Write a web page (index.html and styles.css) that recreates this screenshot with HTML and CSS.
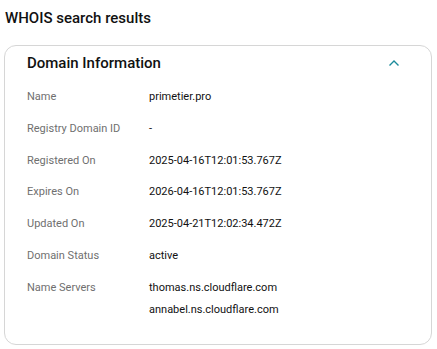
FILE: index.html
```html
<!DOCTYPE html>
<html lang="en">
<head>
    <meta charset="UTF-8">
    <meta name="viewport" content="width=device-width, initial-scale=1.0">
    <title>WHOIS search results</title>
    <link rel="stylesheet" href="styles.css">
</head>
<body>
    <h1 class="page-title">WHOIS search results</h1>

    <div class="info-card">
        <div class="card-header">
            <h2 class="card-title">Domain Information</h2>
            <button class="toggle" type="button" aria-label="Collapse">
                <svg width="12" height="8" viewBox="0 0 12 8">
                    <path d="M1.5 6.5 L6 2 L10.5 6.5" fill="none" stroke="#1b8a9a" stroke-width="1.4"/>
                </svg>
            </button>
        </div>

        <dl class="info-list">
            <div class="info-row">
                <dt>Name</dt>
                <dd>primetier.pro</dd>
            </div>
            <div class="info-row">
                <dt>Registry Domain ID</dt>
                <dd>-</dd>
            </div>
            <div class="info-row">
                <dt>Registered On</dt>
                <dd>2025-04-16T12:01:53.767Z</dd>
            </div>
            <div class="info-row">
                <dt>Expires On</dt>
                <dd>2026-04-16T12:01:53.767Z</dd>
            </div>
            <div class="info-row">
                <dt>Updated On</dt>
                <dd>2025-04-21T12:02:34.472Z</dd>
            </div>
            <div class="info-row">
                <dt>Domain Status</dt>
                <dd>active</dd>
            </div>
            <div class="info-row">
                <dt>Name Servers</dt>
                <dd>
                    <div class="server">thomas.ns.cloudflare.com</div>
                    <div class="server">annabel.ns.cloudflare.com</div>
                </dd>
            </div>
        </dl>
    </div>
</body>
</html>
```

FILE: styles.css
```css
body {
    font-family: Roboto, "Noto Sans", Arial, sans-serif;
    margin: 0;
    padding: 0 5px 6px 4px;
    background-color: #fff;
    color: #111;
}
.page-title {
    margin: 0;
    padding: 8px 0 0 1px;
    font-size: 15px;
    font-weight: 500;
    line-height: 20px;
    height: 37px;
    color: #111;
}
.info-card {
    border: 1px solid #d6d6d6;
    border-radius: 12px;
    padding: 7px 22px 27px 22px;
}
.card-header {
    display: flex;
    align-items: center;
    justify-content: space-between;
    height: 20px;
}
.card-title {
    margin: 0;
    font-size: 15px;
    font-weight: 500;
    line-height: 20px;
}
.toggle {
    background: none;
    border: none;
    padding: 0;
    margin-right: 9px;
    display: flex;
    cursor: pointer;
}
.info-list {
    margin: 17px 0 0 0;
    display: flex;
    flex-direction: column;
    gap: 17.8px;
}
.info-row {
    display: flex;
    font-size: 11px;
    line-height: 14px;
}
.info-row dt {
    width: 122px;
    color: #6f6f6f;
}
.info-row dd {
    margin: 0;
    color: #111;
    display: flex;
    flex-direction: column;
    gap: 8px;
}
```
